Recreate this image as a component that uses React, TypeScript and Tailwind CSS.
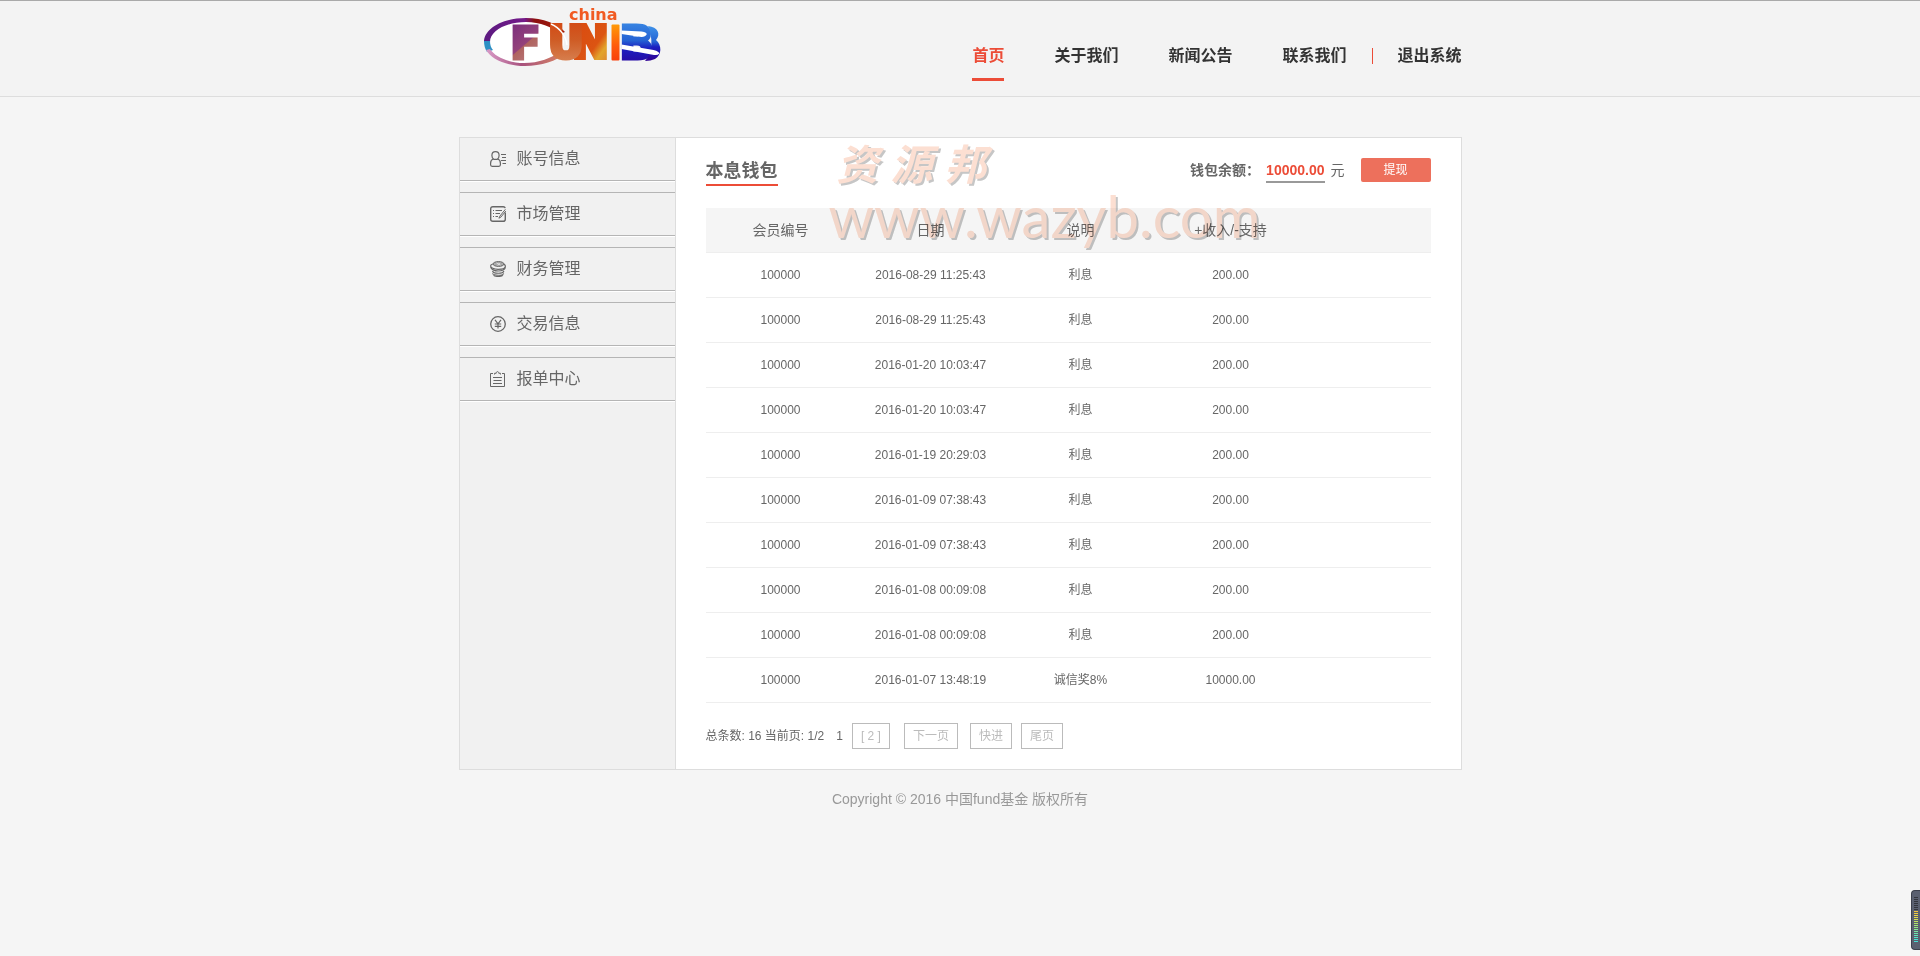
import type { ReactNode } from "react";

const navLinks = [
  { label: "首页", active: true },
  { label: "关于我们" },
  { label: "新闻公告" },
  { label: "联系我们" },
];

const records = [
  { id: "100000", date: "2016-08-29 11:25:43", note: "利息", amount: "200.00" },
  { id: "100000", date: "2016-08-29 11:25:43", note: "利息", amount: "200.00" },
  { id: "100000", date: "2016-01-20 10:03:47", note: "利息", amount: "200.00" },
  { id: "100000", date: "2016-01-20 10:03:47", note: "利息", amount: "200.00" },
  { id: "100000", date: "2016-01-19 20:29:03", note: "利息", amount: "200.00" },
  { id: "100000", date: "2016-01-09 07:38:43", note: "利息", amount: "200.00" },
  { id: "100000", date: "2016-01-09 07:38:43", note: "利息", amount: "200.00" },
  { id: "100000", date: "2016-01-08 00:09:08", note: "利息", amount: "200.00" },
  { id: "100000", date: "2016-01-08 00:09:08", note: "利息", amount: "200.00" },
  { id: "100000", date: "2016-01-07 13:48:19", note: "诚信奖8%", amount: "10000.00" },
];

const meterBars = [
  "#33353d", "#33353d", "#33353d", "#33353d", "#33353d", "#33353d", "#33353d",
  "#f2c63c", "#f2cf3e", "#ecd644", "#e2dc4a", "#d3e052", "#c2e25c", "#b2e468",
  "#a3e674", "#95e782", "#87e890", "#79e89e", "#6ce8ac", "#5fe7ba", "#54e5c6",
  "#4be2d0", "#45dfd6",
];

const Icon = ({ children }: { children: ReactNode }) => (
  <svg
    viewBox="0 0 16 16"
    className="size-4 shrink-0"
    fill="none"
    stroke="#666"
    strokeWidth="1.2"
    aria-hidden="true"
  >
    {children}
  </svg>
);

const menu = [
  {
    label: "账号信息",
    icon: (
      <Icon>
        <path d="M5.5 .7C3.4 .7 1.9 2.300 1.9 4.500c0 1.600.7 3 1.800 3.800h3.600C8.400 7.500 9.100 6.100 9.100 4.500 9.100 2.300 7.600.7 5.500.7z" />
        <path d="M3.200 8C1.600 8.600.6 10 .6 12.200v1.600c0 .9.6 1.500 1.500 1.500h6.800c.9 0 1.500-.6 1.500-1.500v-1.600c0-2.200-1-3.600-2.600-4.200" />
        <path d="M11 3.500h5M12 6.500h4M11 9.500h5M12.500 12.500H16" strokeWidth="1" />
      </Icon>
    ),
  },
  {
    label: "市场管理",
    icon: (
      <Icon>
        <path d="M15.300 6.500v6.700c0 1.300-.8 2.100-2.100 2.100H2.800c-1.300 0-2.100-.8-2.100-2.100V2.800C.7 1.500 1.500.7 2.800.7h10.400c1 0 1.800.5 2 1.400" strokeWidth="1.400" />
        <path d="M3 4.500h1M5.500 4.500h6.500M3 7.500h1M5.500 7.500h4.500M3 10.500h1M5.500 10.500h2.500" />
        <path d="M15.400 3.300 9.800 10.200l-.9 2 2-1.100 4.900-6" strokeWidth="1" />
      </Icon>
    ),
  },
  {
    label: "财务管理",
    icon: (
      <Icon>
        <ellipse cx="8.500" cy="3" rx="5.500" ry="2.400" fill="#aaa" strokeWidth="1" />
        <path d="M6.500 2l4 2M10 1.800l-2.500 2.600" stroke="#eee" strokeWidth=".7" />
        <path d="M2.800 3C1.400 3.400.6 4 .6 4.900c0 1.800 3.300 3.400 7.500 3.400s7.300-1.400 7.300-3.100c0-.8-.5-1.400-1.400-1.900" strokeWidth="1.200" />
        <path d="M.7 6.200c.5 2 3.700 3.800 7.400 3.800 3.800 0 6.800-1.500 7.300-3.600" strokeWidth="1.200" />
        <path d="M2.500 10c.4 1.400 2.800 2.300 5.800 2.300s5.200-.9 5.600-2.300M2.500 12.400c.5 1.200 2.800 1.800 5.700 1.800s5.100-.6 5.500-1.900M3.500 14.400c.8.800 2.600 1.100 4.800 1.100 2 0 3.800-.3 4.600-1.100" strokeWidth="1.100" />
      </Icon>
    ),
  },
  {
    label: "交易信息",
    icon: (
      <Icon>
        <circle cx="8" cy="8" r="7.300" strokeWidth="1.300" />
        <path d="M5 3.800l3 4 3-4M8 7.800v4.800M4.800 8h6.400M4.800 10.300h6.400" strokeWidth="1.200" />
      </Icon>
    ),
  },
  {
    label: "报单中心",
    icon: (
      <Icon>
        <path d="M3 2.500H.5v13h14v-13H12" strokeWidth="1" />
        <path d="M4.500 3.500V2.300h1.700C6.200 1.200 6.700.6 7.500.6s1.300.6 1.300 1.700h1.700v1.200" strokeWidth="1" />
        <path d="M3 6.500h9M3.500 9.500h8M3 12.500h9" strokeWidth="1" />
      </Icon>
    ),
  },
];

const Logo = () => (
  <svg
    viewBox="0 0 185 70"
    width="185"
    height="70"
    className="overflow-visible"
    role="img"
    aria-label="china FUND"
  >
    <defs>
      <linearGradient id="ring" x1="0" y1="0" x2="1" y2="0">
        <stop offset="0" stopColor="#5b1a80" />
        <stop offset=".5" stopColor="#741a8a" />
        <stop offset=".62" stopColor="#8c1010" />
        <stop offset="1" stopColor="#a61c08" />
      </linearGradient>
      <linearGradient id="ringLow" x1="0" y1="0" x2="1" y2="0">
        <stop offset="0" stopColor="#d99bc8" />
        <stop offset=".45" stopColor="#a8527e" />
        <stop offset="1" stopColor="#d98560" />
      </linearGradient>
      <linearGradient id="letterF" x1="0" y1="0" x2=".5" y2="1">
        <stop offset="0" stopColor="#74287f" />
        <stop offset=".6" stopColor="#94427a" />
        <stop offset=".62" stopColor="#b0645f" />
        <stop offset="1" stopColor="#b97a80" />
      </linearGradient>
      <linearGradient id="letterU" x1="0" y1="0" x2="0" y2="1">
        <stop offset="0" stopColor="#d44510" />
        <stop offset=".45" stopColor="#cf5c25" />
        <stop offset="1" stopColor="#d98a5c" />
      </linearGradient>
      <linearGradient id="letterN" x1="0" y1="0" x2="1" y2="1">
        <stop offset="0" stopColor="#d9480f" />
        <stop offset=".6" stopColor="#dc5412" />
        <stop offset=".75" stopColor="#e2a52c" />
        <stop offset="1" stopColor="#dd7a35" />
      </linearGradient>
      <linearGradient id="bar" x1="0" y1="0" x2="0" y2="1">
        <stop offset="0" stopColor="#ff9a08" />
        <stop offset=".6" stopColor="#ff5a0c" />
        <stop offset="1" stopColor="#f8400c" />
      </linearGradient>
      <linearGradient id="letterB" x1="0" y1="0" x2="0" y2="1">
        <stop offset="0" stopColor="#3f92e8" />
        <stop offset=".45" stopColor="#2563d4" />
        <stop offset=".6" stopColor="#1c1fc0" />
        <stop offset="1" stopColor="#300094" />
      </linearGradient>
    </defs>
    <ellipse cx="45" cy="42" rx="39" ry="22" fill="#fff" />
    <path d="M4 42C4 29 22 18 46 18c17 0 32 6 39 14l-5 2C73 27 60 22 46 22 26 22 10 31 10 42z" fill="url(#ring)" />
    <path d="M4 41h6c0 4 1 7 3 9l-6 2c-2-3-3-7-3-11z" fill="#2b8fc4" />
    <path d="M6 50l4-1c5 8 19 14 34 14 15 0 28-5 35-11l6 1c-8 8-24 13-40 13C26 66 11 59 6 50z" fill="url(#ringLow)" />
    <g fontFamily="'DejaVu Sans', sans-serif" fontWeight="bold">
      <text x="92" y="58" fontSize="44" fill="url(#letterN)" stroke="url(#letterN)" strokeWidth="4">N</text>
      <text x="68" y="58" fontSize="44" fill="url(#letterU)" stroke="url(#letterU)" strokeWidth="4">U</text>
      <text x="30" y="59" fontSize="45" fill="url(#letterF)" stroke="url(#letterF)" strokeWidth="3">F</text>
      <text x="139" y="59" fontSize="46" fill="url(#letterB)" stroke="url(#letterB)" strokeWidth="3">B</text>
      <text x="89" y="20" fontSize="16" fill="#f15a22">china</text>
    </g>
    <path d="M168 26c10 1 13 8 8 14 6 5 6 15-1 19-3 1-6 2-10 2 8-8 8-24 3-35z" fill="url(#letterB)" />
    <path d="M71 24c9 4 15 12 16 21" fill="none" stroke="#fff" strokeWidth="1.500" />
    <rect x="129.500" y="23" width="12" height="40" fill="#f3f3f3" />
    <rect x="131.500" y="24.500" width="8" height="36" rx="1" fill="url(#bar)" />
    <path d="M141.500 30.500l20 1q6 1 5 3t-5 2.500l-20-3z" fill="#fff" />
    <path d="M141.500 44.500l32 5.500q6 1.500 5.500 3.500t-5 1.500L141.500 49z" fill="#fff" />
  </svg>
);

const Watermark = () => (
  <div
    aria-hidden="true"
    className="pointer-events-none absolute top-0 left-[153px] text-[#fcdfd2] mix-blend-multiply [text-shadow:2px_2px_0_#c6c6c6]"
  >
    <div className="flex gap-3 pl-2 font-['Noto_Sans_CJK_SC',sans-serif] text-[42px] leading-[48px] font-bold italic">
      <span>资</span>
      <span>源</span>
      <span>邦</span>
    </div>
    <div className="font-['Lato',sans-serif] text-[58px] leading-[60px]">www.wazyb.com</div>
  </div>
);

const pageButton =
  "flex h-[26px] items-center border border-[#bbb] px-2 text-[#bbb]";

const App = () => {
  return (
    <div className="min-h-screen bg-[#f5f5f5] font-['Liberation_Sans','Noto_Sans_CJK_SC',sans-serif] text-xs text-[#666]">
      <header className="border-t border-b border-t-[#a9a9a9] border-b-[#ddd] bg-[#f3f3f3]">
        <div className="mx-auto flex h-[95px] max-w-[1003px] items-start justify-between">
          <a href="#" className="-mt-px ml-[21px]">
            <Logo />
          </a>
          <nav className="flex items-center pt-[41px] text-base leading-7 font-bold text-[#333]">
            <ul className="flex gap-[50px]">
              {navLinks.map((link) => (
                <li key={link.label}>
                  <a
                    href="#"
                    className={
                      link.active
                        ? "block border-b-3 border-[#ec4c37] pb-2 text-[#ec4c37]"
                        : "block border-b-3 border-transparent pb-2"
                    }
                  >
                    {link.label}
                  </a>
                </li>
              ))}
            </ul>
            <span className="mr-6 mb-3 ml-[26px] h-4 w-px bg-[#ec4c37]"></span>
            <a href="#" className="block border-b-3 border-transparent pb-2">
              退出系统
            </a>
          </nav>
        </div>
      </header>

      <div className="mx-auto mt-10 flex max-w-[1003px] border border-[#ddd] bg-white">
        {/* Sidebar */}
        <aside className="w-[216px] shrink-0 border-r border-[#ddd] bg-[#f1f1f1]">
          <ul className="flex flex-col gap-[11px]">
            {menu.map((item) => (
              <li
                key={item.label}
                className="border-y border-[#b5b5b5] shadow-[0_1px_0_#fff] first:border-t-0"
              >
                <a href="#" className="flex h-[42px] items-center gap-[11px] pl-[30px] text-base">
                  {item.icon}
                  {item.label}
                </a>
              </li>
            ))}
          </ul>
        </aside>

        {/* Wallet */}
        <main className="relative grow px-[30px] pb-5">
          <div className="flex h-[70px] items-start justify-between pt-[19px]">
            <h1 className="mt-px border-b-2 border-[#ec4c37] text-lg leading-[26px] font-bold">本息钱包</h1>
            <div className="flex items-center text-sm">
              <span className="font-bold">钱包余额：</span>
              <span className="mt-[2px] ml-[6px] border-b-2 border-[#999] leading-[22px] font-bold text-[#ec4c37]">
                10000.00
              </span>
              <span className="ml-[6px]">元</span>
              <button
                type="button"
                className="ml-4 h-6 w-[70px] rounded-xs bg-[#ed705c] text-xs text-white"
              >
                提现
              </button>
            </div>
          </div>

          <table className="w-full table-fixed border-collapse text-center">
            <thead>
              <tr className="h-11 border-b border-[#eee] bg-[#f5f5f5] text-sm">
                <th className="w-[150px] font-normal">会员编号</th>
                <th className="w-[150px] font-normal">日期</th>
                <th className="w-[150px] font-normal">说明</th>
                <th className="w-[150px] font-normal">+收入/-支持</th>
                <th></th>
              </tr>
            </thead>
            <tbody>
              {records.map((row, index) => (
                <tr key={index} className="h-[45px] border-b border-[#eee]">
                  <td>{row.id}</td>
                  <td>{row.date}</td>
                  <td>{row.note}</td>
                  <td>{row.amount}</td>
                  <td></td>
                </tr>
              ))}
            </tbody>
          </table>

          <div className="flex items-center pt-5">
            <span>总条数: 16 当前页: 1/2</span>
            <span className="mr-[9px] ml-3">1</span>
            <a href="#" className={pageButton}>[ 2 ]</a>
            <a href="#" className={`${pageButton} ml-[14px]`}>下一页</a>
            <a href="#" className={`${pageButton} ml-3`}>快进</a>
            <a href="#" className={`${pageButton} ml-[9px]`}>尾页</a>
          </div>

          <Watermark />
        </main>
      </div>

      <footer className="pt-[19px] text-center text-sm text-[#999]">
        Copyright © 2016 中国fund基金 版权所有
      </footer>

      {/* Side meter */}
      <div className="fixed right-0 bottom-[6px] flex h-[60px] w-[9px] flex-col gap-px rounded-l-sm border border-r-0 border-[#3c404c] bg-[#5a6070] pt-[6px] pl-[2px]">
        {meterBars.map((color, index) => (
          <span key={index} className="h-px w-1" style={{ backgroundColor: color }}></span>
        ))}
      </div>
    </div>
  );
};

export default App;
